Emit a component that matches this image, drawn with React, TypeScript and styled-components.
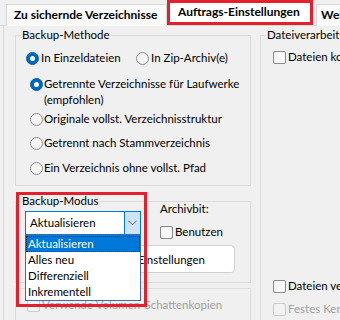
import React from "react";
import styled, { createGlobalStyle } from "styled-components";

const GlobalStyle = createGlobalStyle`
  html, body {
    margin: 0;
    padding: 0;
    background: #f0f0f0;
  }
  body {
    font-family: Lato, "Noto Sans", sans-serif;
    font-size: 11.5px;
    color: #000;
  }
  #root {
    width: 340px;
    height: 320px;
    overflow: hidden;
  }
`;

const App = () => {
  return (
    <Window>
      <GlobalStyle />
      <TabStrip>
        <Tab $width={161}>Zu sichernde Verzeichnisse</Tab>
        <Tab $width={146} $active>
          Auftrags-Einstellungen
        </Tab>
        <Tab $width={80} $gap={3}>
          Weitere
        </Tab>
      </TabStrip>
      <Page>
        <LeftColumn>
          <GroupBox $padding="14px 0 9px 10px">
            <Legend>Backup-Methode</Legend>
            <OptionRow>
              <Option $width={110}>
                <Radio $checked />
                In Einzeldateien
              </Option>
              <Option>
                <Radio />
                In Zip-Archiv(e)
              </Option>
            </OptionRow>
            <SubOptions>
              <Option $top={10} $gap={1}>
                <Radio $checked />
                <span>
                  Getrennte Verzeichnisse für Laufwerke
                  <br />
                  (empfohlen)
                </span>
              </Option>
              <Option $top={3} $gap={1}>
                <Radio />
                Originale vollst. Verzeichnisstruktur
              </Option>
              <Option $top={8} $gap={1}>
                <Radio />
                Getrennt nach Stammverzeichnis
              </Option>
              <Option $top={9} $gap={1}>
                <Radio />
                Ein Verzeichnis ohne vollst. Pfad
              </Option>
            </SubOptions>
          </GroupBox>

          <GroupBox $top={15} $padding="0 0 9px 9px">
            <Legend>Backup-Modus</Legend>
            <ModeRow>
              <Combo>
                <ComboText>Aktualisieren</ComboText>
                <ComboButton>
                  <svg width="9" height="6" viewBox="0 0 9 6">
                    <polyline
                      points="0.5,0.8 4.5,4.8 8.5,0.8"
                      fill="none"
                      stroke="#5a5a5a"
                      strokeWidth="1"
                    />
                  </svg>
                </ComboButton>
              </Combo>
              <ArchivColumn>
                <FieldLabel>Archivbit:</FieldLabel>
                <Option $top={8}>
                  <Check />
                  Benutzen
                </Option>
              </ArchivColumn>
            </ModeRow>
            <Button>Erweiterte Einstellungen</Button>
            <ListBox>
              <ListItem $selected>Aktualisieren</ListItem>
              <ListItem>Alles neu</ListItem>
              <ListItem>Differenziell</ListItem>
              <ListItem>Inkrementell</ListItem>
            </ListBox>
            <Highlight />
          </GroupBox>

          <GroupBox $top={5} $padding="8px 0 20px 11px">
            <Option $disabled>
              <Check $disabled />
              Verwende Volumen-Schattenkopien
            </Option>
          </GroupBox>
        </LeftColumn>

        <RightColumn>
          <GroupBox $padding="13px 0 20px 12px">
            <Legend>Dateiverarbeitung</Legend>
            <Option>
              <Check />
              Dateien komprimieren
            </Option>
            <Option $top={213}>
              <Check />
              Dateien verschlüsseln
            </Option>
            <Option $top={7} $disabled>
              <Check $disabled />
              Festes Kennwort
            </Option>
          </GroupBox>
        </RightColumn>
      </Page>
    </Window>
  );
};

export default App;

const Window = styled.div`
  width: 340px;
  height: 320px;
  overflow: hidden;
  background: #f0f0f0;
`;

const TabStrip = styled.div`
  height: 26px;
  box-sizing: border-box;
  display: flex;
  align-items: flex-end;
  padding-left: 6px;
  border-bottom: 1px solid #d9d9d9;
`;

const Tab = styled.div<{ $width: number; $active?: boolean; $gap?: number }>`
  flex: none;
  box-sizing: border-box;
  width: ${(p) => p.$width}px;
  height: ${(p) => (p.$active ? 25 : 22)}px;
  margin-left: ${(p) => p.$gap ?? 0}px;
  padding-left: ${(p) => (p.$active ? 8 : p.$gap ? 4 : 7)}px;
  border: ${(p) => (p.$active ? "3px solid #e3202b" : "1px solid #d9d9d9")};
  border-bottom: ${(p) => (p.$active ? "3px solid #e3202b" : "none")};
  background: ${(p) => (p.$active ? "#ffffff" : "#fafafa")};
  font-size: 12px;
  font-weight: 700;
  line-height: ${(p) => (p.$active ? 17 : 20)}px;
  white-space: nowrap;
  overflow: hidden;
  position: relative;
  top: ${(p) => (p.$active ? 0 : 1)}px;
`;

const Page = styled.div`
  margin-left: 3px;
  border-left: 1px solid #d9d9d9;
  display: flex;
  gap: 9px;
  padding: 9px 0 0 11px;
  height: 300px;
  box-sizing: border-box;
`;

const LeftColumn = styled.div`
  width: 236px;
  flex: none;
  display: flex;
  flex-direction: column;
`;

const RightColumn = styled.div`
  width: 200px;
  flex: none;
  display: flex;
  flex-direction: column;
`;

const GroupBox = styled.div<{ $top?: number; $padding: string }>`
  position: relative;
  border: 1px solid #dcdcdc;
  margin-top: ${(p) => p.$top ?? 0}px;
  padding: ${(p) => p.$padding};
`;

const Legend = styled.span`
  position: absolute;
  top: -8px;
  left: 5px;
  padding: 0 1px;
  line-height: 14px;
  background: #f0f0f0;
  white-space: nowrap;
`;

const OptionRow = styled.div`
  display: flex;
`;

const SubOptions = styled.div`
  display: flex;
  flex-direction: column;
  padding-left: 4px;
`;

const Option = styled.label<{
  $width?: number;
  $top?: number;
  $gap?: number;
  $disabled?: boolean;
}>`
  display: flex;
  align-items: flex-start;
  gap: ${(p) => p.$gap ?? 2}px;
  width: ${(p) => (p.$width ? `${p.$width}px` : "auto")};
  margin-top: ${(p) => p.$top ?? 0}px;
  line-height: 16px;
  white-space: nowrap;
  color: ${(p) => (p.$disabled ? "#a0a0a0" : "#000")};
`;

const Radio = styled.span<{ $checked?: boolean }>`
  flex: none;
  box-sizing: border-box;
  width: 13px;
  height: 13px;
  margin-top: 2px;
  border-radius: 50%;
  border: 1px solid ${(p) => (p.$checked ? "#0067c0" : "#8a8a8a")};
  background: ${(p) => (p.$checked ? "#0067c0" : "#f6f6f6")};
  display: flex;
  align-items: center;
  justify-content: center;

  &::after {
    content: "";
    display: ${(p) => (p.$checked ? "block" : "none")};
    width: 5px;
    height: 5px;
    border-radius: 50%;
    background: #fff;
  }
`;

const Check = styled.span<{ $disabled?: boolean }>`
  flex: none;
  box-sizing: border-box;
  width: 13px;
  height: 13px;
  margin-top: 2px;
  border-radius: 2px;
  border: 1px solid ${(p) => (p.$disabled ? "#cccccc" : "#8a8a8a")};
  background: ${(p) => (p.$disabled ? "#f3f3f3" : "#f8f8f8")};
`;

const ModeRow = styled.div`
  display: flex;
  align-items: flex-start;
`;

const Combo = styled.div`
  flex: none;
  display: flex;
  width: 116px;
  height: 24px;
  margin-top: 9px;
  box-sizing: border-box;
  border: 1px solid #0078d7;
  background: #fff;
`;

const ComboText = styled.span`
  flex: 1;
  padding-left: 4px;
  line-height: 22px;
`;

const ComboButton = styled.span`
  width: 15px;
  background: #cce4f7;
  border-left: 1px solid #0078d7;
  display: flex;
  align-items: center;
  justify-content: center;
`;

const ArchivColumn = styled.div`
  margin-left: 19px;
  display: flex;
  flex-direction: column;
`;

const FieldLabel = styled.span`
  line-height: 14px;
`;

const Button = styled.button`
  display: flex;
  justify-content: flex-end;
  align-items: center;
  width: 210px;
  height: 28px;
  margin-top: 5px;
  padding: 0 29px 0 0;
  box-sizing: border-box;
  border: 1px solid #d0d0d0;
  border-radius: 4px;
  background: #fff;
  font: inherit;
  color: #000;
  white-space: nowrap;
`;

const ListBox = styled.ul`
  position: absolute;
  z-index: 2;
  left: 9px;
  top: 33px;
  width: 116px;
  margin: 0;
  padding: 0;
  box-sizing: border-box;
  list-style: none;
  border: 1px solid #3c6fa8;
  background: #fff;
`;

const ListItem = styled.li<{ $selected?: boolean }>`
  height: 16px;
  line-height: 16px;
  padding-left: 2px;
  box-sizing: border-box;
  background: ${(p) => (p.$selected ? "#0078d7" : "#fff")};
  color: ${(p) => (p.$selected ? "#fff" : "#000")};
  outline: ${(p) => (p.$selected ? "1px dotted #1a1a1a" : "none")};
  outline-offset: -1px;
`;

const Highlight = styled.div`
  position: absolute;
  z-index: 3;
  left: 0;
  top: -10px;
  width: 131px;
  height: 115px;
  box-sizing: border-box;
  border: 3px solid #e3202b;
  pointer-events: none;
`;
